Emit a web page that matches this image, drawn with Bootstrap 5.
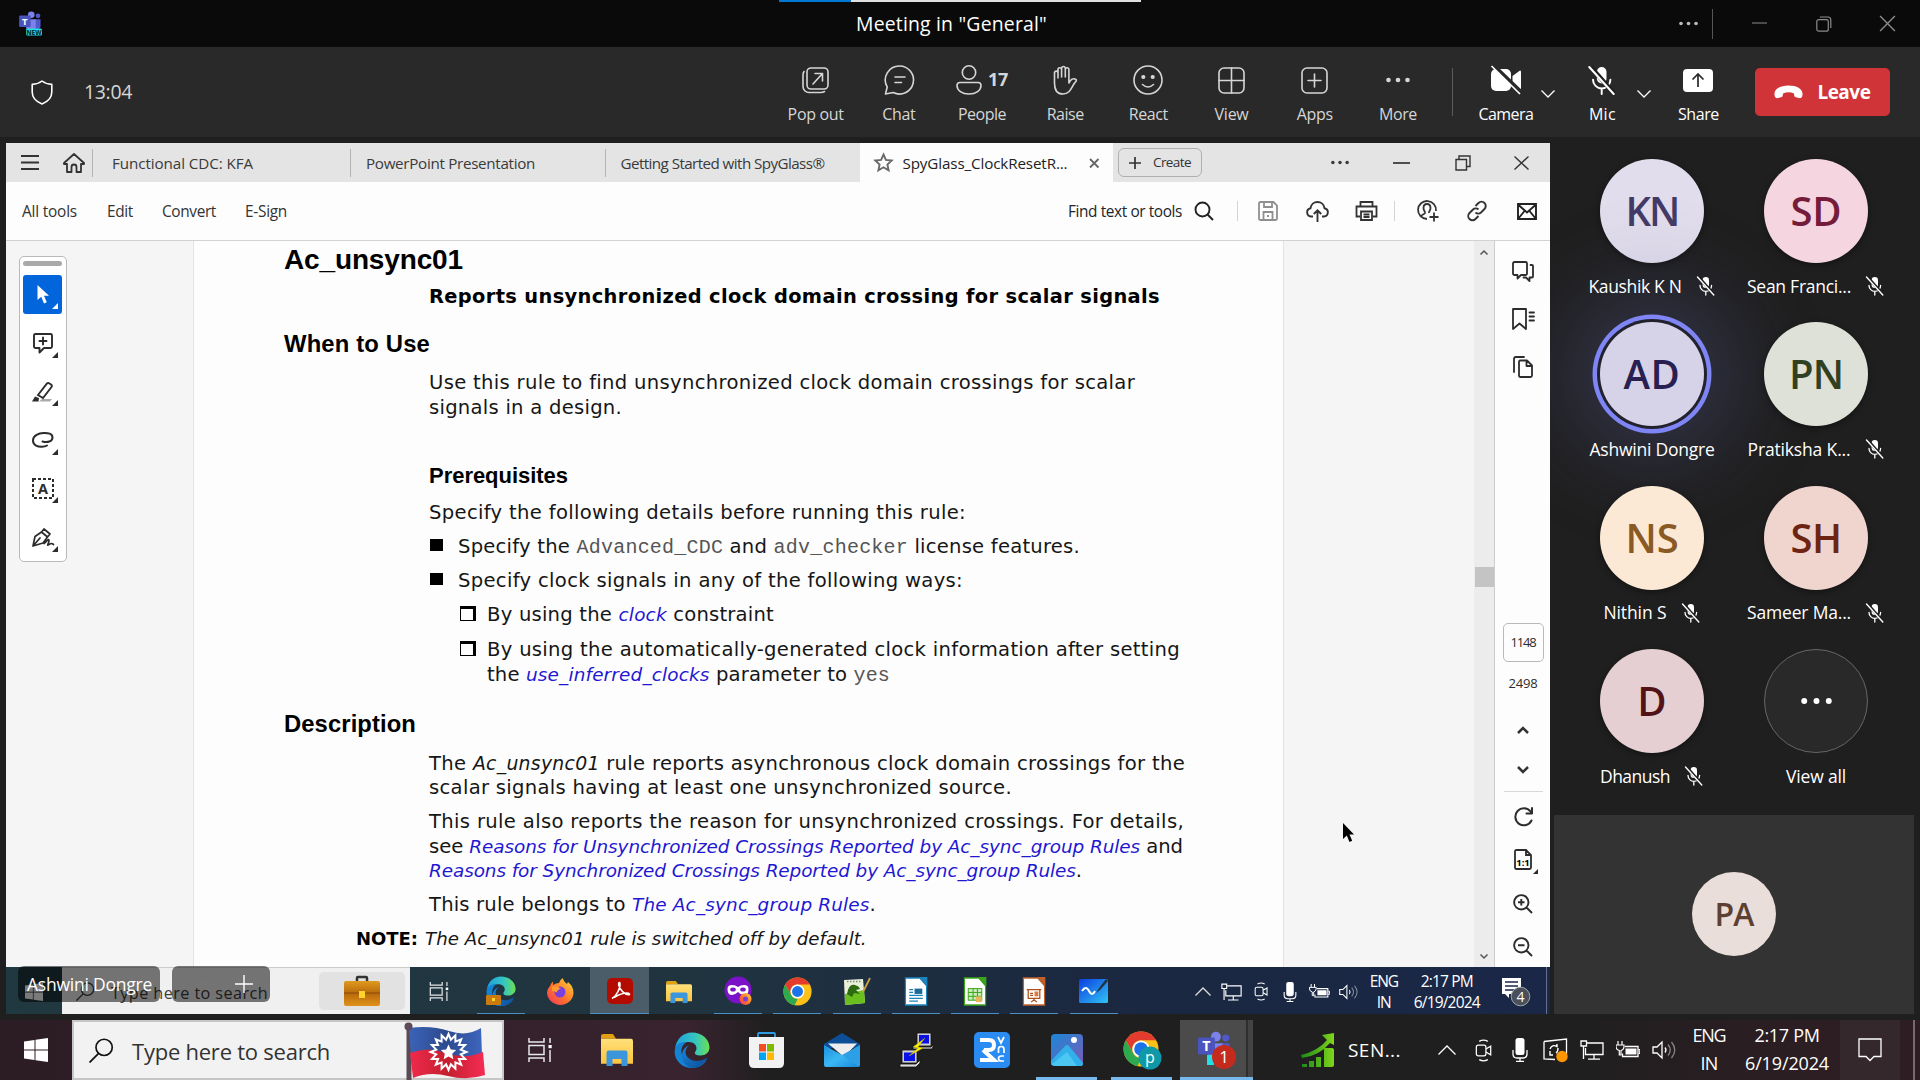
<!DOCTYPE html>
<html lang="en">
<head>
<meta charset="utf-8">
<title>Meeting in "General"</title>
<link rel="stylesheet" href="https://cdn.jsdelivr.net/npm/bootstrap@5.3.0/dist/css/bootstrap.min.css">
<style>
body{width:1920px;height:1080px;overflow:hidden;background:#1f1f1f;color:#fff;font-family:"Open Sans","Noto Sans",sans-serif;line-height:1.2}
svg{display:block;overflow:visible;flex:none}
.ln-i{fill:none;stroke:currentColor;stroke-width:1.6;stroke-linecap:round;stroke-linejoin:round}
[data-w]{display:inline-block;white-space:nowrap}
.bar{display:grid;align-items:center;justify-items:center}
.to-end{justify-self:end}
/* window title */
.titlebar{height:47px;background:#0a0a0a;grid-template-columns:60px 796px 191px 610px 56px 92px 37px 78px;font-size:19.4px;position:relative}
.loader{position:absolute;top:0;left:779px;width:362px;height:2px;background:linear-gradient(90deg,#0078d4 72px,#e1e1e1 72px)}
.dim{color:#8b8b8b}
.vline{border-right:1px solid #555;height:30px;width:100%;display:flex;align-items:center;justify-content:flex-end;padding-right:14px;align-self:center}
.close-x{justify-self:start;margin-left:37px}
/* meeting controls */
.controls{height:90px;background:#292929;color:#d6d6d6;grid-template-columns:84px 48px 642px repeat(8,83.2px) 31.4px 70px 14px 82px 14px 104px 135px 30px;font-size:16px}
.clock-t{font-size:19.5px}
.count{font-size:18px}
.gap-count{gap:6px}
.ctl{display:grid;justify-items:center;align-items:center;align-self:start;padding-top:16px;height:90px;grid-template-rows:34px 35px;align-content:start}
.ctl.on{color:#fff}
.ctl.mic{padding-left:13px;width:82px}
.ctl.share{padding-right:9px;width:104px}
.chev{margin-top:4px}
.sep{width:1px;height:48px;background:#5c5c5c;justify-self:start;margin-left:12px}
.leave{width:135px;height:48px;background:#d13438;border-radius:5px;font-size:19px;font-weight:700;color:#fff;gap:14px}
/* shared screen */
.stage{height:883px;padding:6px 0 0 6px}
.shared{width:1544px;height:871px;background:#fdfdfd;color:#333;position:relative}
.tabs{height:39px;background:#e4e4e4;grid-template-columns:35px 51px 258px 254.5px 255px 253.5px 94px 108px 50px 72px 52px 61px;font-size:15.2px;color:#3a3a3a}
.burger{justify-self:end;margin-right:2px}
.home-i{margin-left:14px}
.tab{height:28px;width:100%;border-left:1px solid #b4b4b4;padding-left:15px;display:flex;align-items:center}
.tab>span{padding-top:1.5px}
.tab.first{padding-left:19px}
.tab.cur{border:0;height:39px;padding:0 14px;background:#fdfdfd;gap:10px;color:#222}
.create{width:84px;height:29px;border:1.5px solid #b0b0b0;border-radius:6px;font-size:13.5px;color:#333;gap:12px}
.tools{height:59px;border-bottom:1px solid #d2d2d2;display:grid;align-items:center;grid-template-columns:16px 85px 55px 83px 823px 117px 37px 16px 59px 41px 56px 10px 47px 52px 47px;font-size:15.4px}
.tools>span{padding-top:3px}
.tools svg{justify-self:center}
.tick{width:1px;height:20px;background:#d4d4d4;justify-self:end}
.tick.first-edge{justify-self:start}
.work{height:726px}
.gutter{width:188px;background:#f5f5f5;border-right:1px solid #e3e3e3;padding:15px 0 0 13px}
.palette{width:48px;height:306px;background:#fff;border:1.5px solid #b9b9b9;border-radius:5px;padding:4px 3px}
.grip{height:5px;width:39px;background:#a9a9a9;border-radius:3px;margin-bottom:9px}
.tool{width:39px;height:39px;margin-bottom:9.6px;display:flex;align-items:center;justify-content:center;position:relative;color:#2c2c2c}
.tool::after{content:"";position:absolute;right:4px;bottom:5px;border:3px solid transparent;border-right-color:currentColor;border-bottom-color:currentColor}
.tool.sel{background:#0265dc;color:#fff;border-radius:3px}
.pdf{width:1090px;background:#fdfdfd;font-family:"DejaVu Sans",sans-serif;font-size:19.6px;color:#161616;padding:6.5px 0 0 90px;border-right:1px solid #e3e3e3}
.rest{width:190px;background:#f5f5f5}
.scroller{width:21px;background:#ececec;border-right:1px solid #ccc;display:grid;grid-template-rows:22px 304px 20px 1fr 22px;justify-items:center;align-items:center}
.thumb{width:19px;height:20px;background:#c4c4c4}
.side{width:55px;background:#fdfdfd;color:#2c2c2c;display:grid;justify-items:center;align-items:center;padding-left:1px;grid-template-rows:6px 48px 48px 47px 272px 44px 47px 34px 9px 41px 44px 46px 40px 1fr;font-size:13px}
.side-line{width:39px;height:1px;background:#d8d8d8}
.corner-t{position:absolute;right:-6px;bottom:-4px}
.pg{width:41px;height:39px;border:1.5px solid #b9b9b9;border-radius:5px;align-self:end}
.row-l{height:24px;line-height:24px;display:flex;align-items:baseline}
.row-l>[data-w]{line-height:24px}
.h-a{font:700 28px/24px "Liberation Sans",sans-serif;color:#000}
.h-b{font:700 23.8px/24px "Liberation Sans",sans-serif;color:#000}
.h-c{font:700 22px/24px "Liberation Sans",sans-serif;color:#000}
.sum-line{font-size:19.4px;color:#000}
.note-k{font-size:18px;color:#000}
.note-t{font-size:18.2px;margin-left:7px}
.in1{padding-left:145px}.in2{padding-left:203px}.in-note{padding-left:72px}
.bul{position:relative;padding-left:29px}
.bul::before{content:"";position:absolute;left:1px;top:4px;width:13px;height:12.5px;background:#000}
.bul.box{padding-left:58px}
.bul.box::before{background:none;left:31px;top:3px;width:16px;height:15px;border:1.5px solid #000;border-top-width:3.5px;border-right-width:3px}
.g1{margin-top:1px}.g05{margin-top:.4px}.g10{margin-top:10px}.g11{margin-top:10.7px}.g13{margin-top:13px}.g14{margin-top:13.5px}.g15{margin-top:15px}.g16{margin-top:16px}.g22{margin-top:22.5px}.g25{margin-top:24.8px}.g44{margin-top:44px}
.lk{color:#1f17d2;font-style:italic;font-size:.94em}
.pdf i:not(.note-t){font-size:.96em}
.tt{font-family:"Liberation Mono",monospace;color:#555;font-size:20px;line-height:1}
.pointer{position:absolute;left:1336px;top:679px}
.plate{position:absolute;top:823px;height:36px;border-radius:6px;background:rgba(0,0,0,.52);color:#fff;display:flex;align-items:center}
.plate.who{left:12px;width:142px;padding-left:9px;font-size:17.5px}
.plate.zoomer{left:166px;width:98px;justify-content:space-around;padding:0 6px 0 14px}
/* inner taskbar */
.inner-task{height:47px;background:linear-gradient(90deg,#203840,#203440 45%,#1b2840 70%,#1a2747);color:#fff;grid-template-columns:56px 348px 61.5px repeat(11,59.25px) 88px 31px 27px 27.5px 28px 30px 8px 42px 84px 54px 1fr;font-size:15.5px}
.inner-task .run{height:47px;width:48px;border-bottom:1px solid #4a8fc4;display:flex;align-items:center;justify-content:center;padding-top:2px}
.inner-task .run.hot{width:59px;background:#4b5d69}
.inner-task>svg{margin-top:2px}
.i-view{margin-right:3px}
.i-batt{margin-left:17px}
.i-vol{margin-left:18px}
.fakebox{width:348px;height:47px;background:#f0f0f0;color:#3c3c3c;display:grid;grid-template-columns:14px 35px 208px 86px;align-items:center;justify-items:start;border-top:1px solid #ccc;font-size:16.2px}
.fakebox>span{margin-top:6px}
.case{width:86px;height:38px;background:#e2e2e2;border-radius:5px;display:flex;align-items:center;justify-content:center}
.two{display:grid;justify-items:center;row-gap:2px;padding-top:3px}
.inner-task .two{row-gap:2.5px}
.edge-line{width:1px;height:47px;background:#65708a;justify-self:end;margin-right:3px}
/* roster */
.roster{width:370px;padding:16px 0 0 20px}
.people{display:grid;grid-template-columns:164px 164px;grid-auto-rows:163.4px}
.person{display:flex;flex-direction:column;align-items:center;font-size:17.5px}
.face{width:104px;height:104px;border-radius:50%;display:flex;align-items:center;justify-content:center;font-size:40px;font-weight:600;box-shadow:0 2px 6px rgba(0,0,0,.4);flex:none}
.face.talk{box-shadow:0 0 0 3px #22222c,0 0 0 7.5px #7f85f5,0 0 90px 35px rgba(91,95,160,.32)}
.nm{height:26px;margin-top:10px;display:flex;align-items:center;gap:14px;position:relative;z-index:1}
.kn{background:#e1ddec;color:#443a66}.sd{background:#f5d5df;color:#741c3a}.ad{background:#d6d3e8;color:#282050}.pn{background:#dde1d8;color:#324022}.ns{background:#fbe9d6;color:#8a5a25}.sh{background:#f0d5cf;color:#6e2412}.dh{background:#e6cfd2;color:#531217}.va{background:#292929;border:1px solid #666;box-shadow:none}
.self{width:360px;height:199px;background:#333;margin:2px 0 0 -16px;display:flex;align-items:center;justify-content:center}
.self .face{width:84px;height:84px;background:#e9deda;color:#5c4033;font-size:32px;box-shadow:none}
/* host taskbar */
.host-task{height:60px;background:linear-gradient(90deg,#2c1c24,#35222c 28%,#38232e 36%,#1f1f1f 40%,#1f1f1f 82%,#2b1e22 92%,#2e1e24);grid-template-columns:72px 432px repeat(10,75px) 47px 34px 79px 51px 38px 34px 37px 36px 36px 36px 54px 102px 62px 1fr;font-size:19px}
.search{width:432px;height:60px;background:#f2f2f2;border:2px solid #c6c6c6;color:#333;display:grid;grid-template-columns:58px 272px 1fr;align-items:center;justify-items:start;font-size:22px}
.search>span{margin-top:-2px}
.search .glass{margin-left:15px;margin-top:-3px;color:#111}
.h-view{margin-right:3px}
.app{height:60px;width:61px;display:flex;align-items:center;justify-content:center;border-bottom:3px solid transparent;padding-top:3px}
.app.live{border-color:#76b9ed}
.app.front{width:73px;background:linear-gradient(90deg,#4b4b4b 66px,#2e2e2e 66px,#2e2e2e 68px,#434343 68px);padding-right:1px}
.host-task .two{row-gap:6px;font-size:18px;padding-top:0}
.h-chev{margin-left:15px}
.note{height:60px;width:60px;background:#35282c;display:flex;align-items:center;justify-content:center;justify-self:end}
.peek{border-left:2px solid #77696e;height:60px;justify-self:end;width:7px}
</style>
<script src="https://cdn.jsdelivr.net/npm/bootstrap@5.3.0/dist/js/bootstrap.bundle.min.js"></script>
</head>
<body>
<svg width="0" height="0" class="position-absolute">
<defs>
<linearGradient id="gTeal" x1="0" y1="0" x2="1" y2="0"><stop offset="0" stop-color="#1e9fe0"/><stop offset=".6" stop-color="#36c6c0"/><stop offset="1" stop-color="#6be04f"/></linearGradient>
<linearGradient id="gBlue" x1="0" y1="0" x2="1" y2="1"><stop offset="0" stop-color="#1a86dc"/><stop offset="1" stop-color="#0b4c96"/></linearGradient>
<linearGradient id="gFox" x1="0" y1="1" x2="1" y2="0"><stop offset="0" stop-color="#f4325e"/><stop offset=".5" stop-color="#ff7a28"/><stop offset="1" stop-color="#ffdf3c"/></linearGradient>
<linearGradient id="gFold" x1="0" y1="0" x2="0" y2="1"><stop offset="0" stop-color="#ffe07a"/><stop offset="1" stop-color="#fbc440"/></linearGradient>
<linearGradient id="gSky" x1="0" y1="0" x2="1" y2="1"><stop offset="0" stop-color="#1b87d8"/><stop offset="1" stop-color="#7a5bb4"/></linearGradient>
<linearGradient id="gMail" x1="0" y1="0" x2="1" y2="1"><stop offset="0" stop-color="#1b8fdc"/><stop offset=".5" stop-color="#3bb8f3"/><stop offset="1" stop-color="#1887da"/></linearGradient>
<linearGradient id="gUp" x1="0" y1="0" x2="1" y2="0"><stop offset="0" stop-color="#1d8a1a"/><stop offset="1" stop-color="#7fd61a"/></linearGradient>
<linearGradient id="gWb" x1="0" y1="0" x2="1" y2="1"><stop offset="0" stop-color="#0b3fe0"/><stop offset="1" stop-color="#31c4f4"/></linearGradient>
<linearGradient id="gBr" x1="0" y1="0" x2="0" y2="1"><stop offset="0" stop-color="#e09a1e"/><stop offset=".5" stop-color="#b86a0c"/><stop offset="1" stop-color="#e0921a"/></linearGradient>
<linearGradient id="gFb" x1="0" y1="0" x2="1" y2="0"><stop offset="0" stop-color="#3c63b8"/><stop offset=".5" stop-color="#2c4a8e"/><stop offset="1" stop-color="#3e66bd"/></linearGradient>
<linearGradient id="gFr" x1="0" y1="0" x2="1" y2="0"><stop offset="0" stop-color="#f02a4c"/><stop offset=".5" stop-color="#c41f2e"/><stop offset="1" stop-color="#f62c55"/></linearGradient>
<symbol id="teams" viewBox="0 0 34 36"><circle cx="19" cy="6" r="5.2" fill="#7b83eb"/><circle cx="29.500" cy="7.500" r="3.700" fill="#5059c9"/><path d="M24 13h9.500v11a6 6 0 0 1-9.500 4z" fill="#5059c9"/><path d="M11 13h15v12a8 8 0 0 1-15 2z" fill="#7b83eb"/><rect x="0" y="7" width="18" height="18" rx="1.500" fill="#4b53bc"/><text x="9" y="21.500" font-size="15" font-weight="700" text-anchor="middle" fill="#fff" font-family="Open Sans">T</text></symbol>
<symbol id="mute" viewBox="0 0 20 20"><rect x="6.600" y="1" width="6.400" height="11" rx="3.200" fill="currentColor"/><path d="M4 9.500a5.800 5.800 0 0 0 11.600 0M9.800 15.500V19" fill="none" stroke="currentColor" stroke-width="1.300" stroke-linecap="round"/><path d="M2.500 1 18 18.500" stroke="#1f1f1f" stroke-width="3"/><path d="M1.500 1 17.800 19" stroke="currentColor" stroke-width="1.400" stroke-linecap="round"/></symbol>
<symbol id="down" viewBox="0 0 14 8"><path d="M.5.5 7 7 13.500.5" fill="none" stroke="currentColor" stroke-width="1.300"/></symbol>
<symbol id="dots" viewBox="0 0 24 6"><circle cx="2.500" cy="3" r="2.300" fill="currentColor"/><circle cx="12" cy="3" r="2.300" fill="currentColor"/><circle cx="21.500" cy="3" r="2.300" fill="currentColor"/></symbol>
<symbol id="restore" viewBox="0 0 16 16"><g fill="none" stroke="currentColor" stroke-width="1.200"><rect x=".8" y="3.600" width="11.500" height="11.600" rx="2"/><path d="M3.800 1h8a3 3 0 0 1 3 3v8"/></g></symbol>
<symbol id="cross" viewBox="0 0 16 16"><path d="M1 1 15 15M15 1 1 15" stroke="currentColor" stroke-width="1.300" fill="none"/></symbol>
<symbol id="tview" viewBox="0 0 24 24"><g fill="none" stroke="#e8e8e8" stroke-width="1.500"><path d="M1 0v4h15V0M1 24v-4h15v4M1 7.500h15v9H1zM22 0v5M22 12v12"/></g><rect x="20.500" y="7" width="3.200" height="3.200" fill="#fff"/></symbol>
<symbol id="folder" viewBox="0 0 32 27"><path d="M0 2a2 2 0 0 1 2-2h10l3 4h-15z" fill="#e0a010"/><path d="M0 4h30a2 2 0 0 1 2 2v19H0z" fill="url(#gFold)"/><path d="M5.500 27V16a2 2 0 0 1 2-2h17a2 2 0 0 1 2 2v11h-6v-6h-9v6z" fill="#3c96dc"/></symbol>
<symbol id="edge" viewBox="0 0 36 36"><path d="M1 17C2 7 9 .5 18 .5c10 0 17 6.500 17.500 14.500.3 5-4 8.500-9 8.500-4 0-6-1.300-5.600-3 .3-1.200 1.600-1.800 1.600-4.500 0-3-3-6-7.500-6C8 10 3 12 1 17z" fill="url(#gTeal)"/><path d="M.6 19C1 11.500 8 9.500 13 10c-4 2-6 6-5.500 10.500C8 27 13 32 20 32.500c5 .3 9-1.500 12.500-4.500C30 33 24 36 18 36 8 36 .3 28.500.6 19z" fill="#1583d4"/><path d="M15 13.500c-4 3-4.500 8-1.500 11.500 4.500 5.500 13 5 19 1 .5 0 .8.500.3 1.300C29.500 33 24 36 18 36c-7-1.500-10.500-7-10-13 .3-5 3.500-8.500 7-9.500z" fill="url(#gBlue)"/></symbol>
<symbol id="chrome" viewBox="0 0 36 36"><circle cx="18" cy="18" r="17.500" fill="#fbc116"/><path d="M2.800 9.300A17.500 17.500 0 0 1 33.200 9.300H18a9 9 0 0 0-7.800 13.200z" fill="#e33b2e"/><path d="M2.800 9.300 10.200 22.500a9 9 0 0 0 8 4.500l-3.700 8.200A17.500 17.500 0 0 1 2.800 9.300z" fill="#2da94f"/><circle cx="18" cy="18" r="8.600" fill="#fff"/><circle cx="18" cy="18" r="6.800" fill="#1a73e8"/></symbol>
<symbol id="win" viewBox="0 0 24 24"><path d="M0 3.400 10.500 2v9.500H0zM11.500 1.800 24 0v11.500H11.500zM0 12.500h10.500V22L0 20.600zM11.500 12.500H24V24l-12.500-1.800z" fill="#fff"/></symbol>
<symbol id="cam2" viewBox="0 0 18 24"><g fill="none" stroke="currentColor" stroke-width="1.300"><rect x="1" y="6.500" width="10" height="11" rx="2"/><path d="m11 10.500 5-3v9l-5-3M4 2.500q4.500-2.500 9 0M4 21.500q4.500 2.500 9 0"/></g></symbol>
<symbol id="mic2" viewBox="0 0 16 24"><rect x="3.500" y="0" width="9" height="17" rx="2.500" fill="#fff"/><path d="M1 12v4q0 4 4 4h6q4 0 4-4v-4M8 20v3M4 23.400h8" fill="none" stroke="#fff" stroke-width="1.300"/></symbol>
<symbol id="net" viewBox="0 0 24 20"><g fill="none" stroke="currentColor" stroke-width="1.300"><path d="M7 3h16v11.500H5.500V8M14 14.500V19M8 19.200h12"/><path d="M1 1h5.500v5H1zM3.500 6v13"/></g></symbol>
<symbol id="batt" viewBox="0 0 24 18"><path d="M9 5.500h13v10H6.500v-3" fill="none" stroke="currentColor" stroke-width="1.300"/><rect x="9.500" y="7.500" width="11" height="6" fill="currentColor"/><path d="M22.500 8.500h1.300v4h-1.300M2 0v4M6 0v4M0 4h8v2a4 4 0 0 1-3 3.500V14H3.300V9.500A4 4 0 0 1 0 6z" fill="none" stroke="currentColor" stroke-width="1.200"/></symbol>
<symbol id="vol" viewBox="0 0 24 20"><path d="M1 7h4l5-5v16l-5-5H1z" fill="none" stroke="currentColor" stroke-width="1.300"/><path d="M13 7.500q2 2.500 0 5" fill="none" stroke="currentColor" stroke-width="1.300"/><path d="M16 4.500q4.500 5.500 0 11M19.500 2q6.500 8 0 16" fill="none" stroke="currentColor" opacity=".45" stroke-width="1.300"/></symbol>
<symbol id="sheet" viewBox="0 0 24 30"><path d="M1 1h15l7 8v20H1z" fill="#fff" stroke="currentColor" stroke-width="1.400"/><path d="M15.500 0H24v9.500z" fill="currentColor"/></symbol>
<symbol id="lens" viewBox="0 0 24 24"><circle cx="14.500" cy="9" r="7.800" fill="none" stroke="currentColor" stroke-width="1.600"/><path d="M9 15 .5 23.500" stroke="currentColor" stroke-width="1.700"/></symbol>
</defs>
</svg>

<header class="bar titlebar">
  <div class="loader"></div>
  <svg width="24" height="25"><use href="#teams" width="24" height="23"/><rect x="8" y="17.500" width="16" height="7" rx="1.500" fill="#22e0e8"/><text x="16" y="23.500" font-size="6.500" font-weight="800" text-anchor="middle" fill="#06363c">NEW</text></svg>
  <span></span>
  <span data-w="191">Meeting in "General"</span>
  <span></span>
  <div class="vline dim"><svg width="19" height="5" color="#bbb"><use href="#dots"/></svg></div>
  <svg class="dim" width="15" height="3"><path d="M0 1h15" stroke="currentColor"/></svg>
  <svg class="dim" width="16" height="16"><use href="#restore"/></svg>
  <svg class="dim close-x" width="17" height="17"><use href="#cross"/></svg>
</header>

<nav class="bar controls">
  <svg class="ln-i text-white" width="22" height="25" viewBox="0 0 22 25"><path d="M11 1q4 3.200 9.800 3.400V12q0 8-9.800 12Q1.200 20 1.200 12V4.400Q7 4.200 11 1z"/></svg>
  <span data-w="48" class="clock-t">13:04</span>
  <span></span>
  <div class="ctl"><svg class="ln-i" width="27" height="27" viewBox="0 0 27 27"><rect x="5" y="1" width="21" height="21" rx="4"/><path d="M2 4.500Q1 6 1 8v11.500a6 6 0 0 0 6 6h11.500q2.500 0 4-1M11 17l9-10M13 6.500h7.500V14"/></svg><span data-w="56">Pop out</span></div>
  <div class="ctl"><svg class="ln-i" width="30" height="30" viewBox="0 0 30 30"><path d="M15.500 1a14 14 0 1 1-6.300 26.500L1.500 29l1.700-7A14 14 0 0 1 15.500 1zM11 12h10M11 17.500h6.500"/></svg><span data-w="33">Chat</span></div>
  <div class="ctl"><div class="d-flex align-items-center gap-count"><svg class="ln-i" width="26" height="30" viewBox="0 0 26 30"><circle cx="13" cy="7.500" r="6.700"/><path d="M4 17.500h18q3 0 3 3c0 5-5 8.500-12 8.500S1 25.500 1 20.500q0-3 3-3z"/></svg><b data-w="20" class="count">17</b></div><span data-w="48">People</span></div>
  <div class="ctl"><svg class="ln-i" width="25" height="30" viewBox="0 0 25 30"><path d="M1.500 7.500a1.800 1.800 0 0 1 3.500 0V13V4.500a1.800 1.800 0 0 1 3.600 0V12 3a1.900 1.900 0 0 1 3.700 0v9V4.500a1.800 1.800 0 0 1 3.600 0V18c2-3.500 4-5.500 7-3.500 1.400 1-.5 2.200-2 4.500-3 5-4.500 10-11 10C3 29 1.500 24 1.500 18z"/></svg><span data-w="37">Raise</span></div>
  <div class="ctl"><svg class="ln-i" width="30" height="30" viewBox="0 0 30 30"><circle cx="15" cy="15" r="14"/><circle cx="10.300" cy="12" r="1.300" fill="currentColor"/><circle cx="19.700" cy="12" r="1.300" fill="currentColor"/><path d="M9.500 19.500q5.500 5 11 0"/></svg><span data-w="39">React</span></div>
  <div class="ctl"><svg class="ln-i" width="27" height="27" viewBox="0 0 27 27"><rect x="1" y="1" width="25" height="25" rx="5"/><path d="M13.500 1v25M1 13.500h25"/></svg><span data-w="34">View</span></div>
  <div class="ctl"><svg class="ln-i" width="27" height="27" viewBox="0 0 27 27"><rect x="1" y="1" width="25" height="25" rx="5"/><path d="M13.500 7v13M7 13.500h13"/></svg><span data-w="36">Apps</span></div>
  <div class="ctl"><svg width="24" height="6"><use href="#dots"/></svg><span data-w="38">More</span></div>
  <div class="sep"></div>
  <div class="ctl on"><svg width="32" height="30" viewBox="0 0 32 30"><rect x="1" y="4" width="20" height="22" rx="5" fill="#fff"/><path d="M22.500 11 30 5.500q1 0 1 1v17q0 1-1 1L22.500 19z" fill="#fff"/><path d="M3 0 32 28" stroke="#292929" stroke-width="4"/><path d="M1.500 1 30 29" stroke="#fff" stroke-width="1.700"/></svg><span data-w="55">Camera</span></div>
  <svg class="text-white chev" width="14" height="8"><use href="#down"/></svg>
  <div class="ctl on mic"><svg width="30" height="31" viewBox="0 0 20 20"><use href="#mute"/></svg><span data-w="27">Mic</span></div>
  <svg class="text-white chev" width="14" height="8"><use href="#down"/></svg>
  <div class="ctl on share"><svg width="30" height="23" viewBox="0 0 30 23"><rect width="30" height="23" rx="4" fill="#fff"/><path d="M15 18V5M9.500 10.500 15 5l5.500 5.500" fill="none" stroke="#292929" stroke-width="1.700"/></svg><span data-w="41">Share</span></div>
  <button class="btn leave p-0 d-flex align-items-center justify-content-center"><svg width="29" height="14" viewBox="0 0 29 14"><path d="M14.500.5C23 .5 29 4 28.500 9.500c-.2 3-1.500 4-3.500 3.600l-3-.8c-1.500-.4-1.800-1.300-2-3.800-3.500-1.700-7.500-1.700-11 0-.2 2.500-.5 3.400-2 3.800l-3 .8C2 13.500.7 12.500.5 9.500 0 4 6 .5 14.500.5z" fill="#fff"/></svg><span data-w="53">Leave</span></button>
</nav>

<main class="d-flex stage">
<section class="shared">
  <div class="bar tabs">
    <svg class="burger" width="18" height="15"><path d="M0 1h18M0 7.500h18M0 14h18" stroke="#333" stroke-width="2"/></svg>
    <svg class="home-i" width="22" height="20" viewBox="0 0 22 20"><path d="M1 10 11 1l10 9v1h-3v8h-4.500v-5a2.500 2.500 0 0 0-5 0v5H4v-8H1z" fill="none" stroke="#333" stroke-width="1.800" stroke-linejoin="round"/></svg>
    <div class="tab first"><span data-w="141">Functional CDC: KFA</span></div>
    <div class="tab"><span data-w="169">PowerPoint Presentation</span></div>
    <div class="tab"><span data-w="204">Getting Started with SpyGlass®</span></div>
    <div class="tab cur"><svg width="19" height="19" viewBox="0 0 19 19"><path d="m9.500 1.500 2.400 5.400 5.800.6-4.300 4 1.200 5.800-5.100-3-5.100 3 1.200-5.800-4.300-4 5.800-.6z" fill="none" stroke="#6a6a6a" stroke-width="1.900"/></svg><span data-w="165">SpyGlass_ClockResetR...</span><svg width="10" height="10" class="ms-auto"><path d="M1 1 9.500 9.500M9.500 1 1 9.500" stroke="#666" stroke-width="1.800"/></svg></div>
    <div class="create d-flex align-items-center justify-content-center"><svg width="12" height="12"><path d="M6 0v12M0 6h12" stroke="#333" stroke-width="1.700"/></svg><span data-w="38">Create</span></div>
    <span></span>
    <svg width="18" height="5"><use href="#dots"/></svg>
    <svg width="17" height="2"><path d="M0 1h17" stroke="#333" stroke-width="1.700"/></svg>
    <svg width="16" height="16" viewBox="0 0 16 16"><path d="M1 4.500h10.500V15H1zM4 4V1h11v10.500h-3" fill="none" stroke="#333" stroke-width="1.400"/></svg>
    <svg class="ms-1" width="15" height="14"><path d="M.5.5 14.500 13.500M14.500.5.5 13.500" stroke="#333" stroke-width="1.400"/></svg>
  </div>
  <div class="tools">
    <span></span><span><span data-w="55">All tools</span></span><span><span data-w="26">Edit</span></span><span><span data-w="54">Convert</span></span><span><span data-w="42">E-Sign</span></span>
    <span class="text-dark"><span data-w="114">Find text or tools</span></span>
    <svg width="20" height="20" viewBox="0 0 20 20"><circle cx="8.500" cy="8.500" r="7" fill="none" stroke="#222" stroke-width="1.900"/><path d="m13.500 13.500 5.500 5.500" stroke="#222" stroke-width="2"/></svg>
    <i class="tick"></i>
    <svg width="20" height="20" viewBox="0 0 20 20"><path d="M2.500 1h13L19 4.500v13a1.500 1.500 0 0 1-1.500 1.500h-15A1.500 1.500 0 0 1 1 17.500v-15A1.500 1.500 0 0 1 2.500 1zM6 1v5h8V1M5.500 19v-8h9v8M9 15h2" fill="none" stroke="#8f8f8f" stroke-width="1.800"/></svg>
    <svg width="23" height="21" viewBox="0 0 23 21"><path d="M7 15.500H5a4.200 4.200 0 0 1-.5-8.300C5 3.500 8 1 11.500 1S18 3.500 18.500 7.200a4.200 4.200 0 0 1-.5 8.300h-2M11.500 21V9.500M7.800 13l3.700-3.700 3.700 3.700" fill="none" stroke="#333" stroke-width="1.900"/></svg>
    <svg width="23" height="20" viewBox="0 0 23 20"><path d="M5.500 5.500V1h12v4.500M5 15.500H1.500v-10h20v10H18M6 10.500h11V19H6zM8.500 13.500h6M8.500 16h6" fill="none" stroke="#333" stroke-width="1.800"/></svg>
    <i class="tick first-edge"></i>
    <svg width="22" height="22" viewBox="0 0 22 22"><path d="M10 19a9 9 0 1 1 9-8M3.500 16.500c1-2 4-2 4.500-3.500.4-1.500-1.500-2-1.500-5C6.500 5.500 8 4 10 4s3.500 1.500 3.500 4c0 3-1.900 3.500-1.500 5M17 12.500v9M12.500 17h9" fill="none" stroke="#333" stroke-width="1.800"/></svg>
    <svg width="20" height="20" viewBox="0 0 20 20"><path d="m8.500 5 3-3a4 4 0 0 1 6 6l-3.500 3.500a4 4 0 0 1-5.500 0M11.500 15l-3 3a4 4 0 0 1-6-6L6 8.500a4 4 0 0 1 5.500 0" fill="none" stroke="#333" stroke-width="1.900"/></svg>
    <svg width="20" height="17" viewBox="0 0 20 17"><path d="M1 1h18v15H1zM1 1.500l9 8 9-8M1 16l6.500-8M19 16l-6.500-8" fill="none" stroke="#222" stroke-width="1.900"/></svg>
  </div>
  <div class="d-flex work">
    <div class="gutter">
      <div class="palette">
        <div class="grip"></div>
        <div class="tool sel"><svg width="12" height="19" viewBox="0 0 12 19"><path d="M.5 0v15l3.700-3.300L7 18.500l2.800-1.200L7 10.800h5z" fill="#fff"/></svg></div>
        <div class="tool"><svg class="ln-i" width="20" height="20" viewBox="0 0 20 20"><path d="M2.500 1h15A1.500 1.500 0 0 1 19 2.500v11a1.500 1.500 0 0 1-1.500 1.500H11l-4.500 4.500V15h-4A1.500 1.500 0 0 1 1 13.500v-11A1.500 1.500 0 0 1 2.500 1zM10 4.500v7M6.500 8h7" stroke-width="1.900"/></svg></div>
        <div class="tool"><svg width="21" height="20" viewBox="0 0 21 20"><path d="M10 17h10l-2 2.500H7z" fill="#aaa"/><path d="m6 13 9-11.500q1-1 2.500 0l1.500 1q1.500 1 .5 2.500L11 16z" fill="none" stroke="#2c2c2c" stroke-width="1.900"/><path d="M0 19.500 3 14.500 7 16l-.5 3.500z" fill="#2c2c2c"/></svg></div>
        <div class="tool"><svg class="ln-i" width="22" height="16" viewBox="0 0 22 16"><path d="M10.500 9.500c5 1.500 10 0 10-4S16 .8 11.500 1 1 3.500 1 8.500 6 15 10 14.800q3 0 5-1.300" stroke-width="2"/></svg></div>
        <div class="tool"><svg width="22" height="21" viewBox="0 0 22 21"><rect x="1" y="1" width="20" height="19" fill="none" stroke="#2c2c2c" stroke-width="2" stroke-dasharray="3 2"/><text x="11" y="15.800" font-size="14.500" font-weight="700" text-anchor="middle" fill="#2c2c2c">A</text></svg></div>
        <div class="tool"><svg class="ln-i" width="22" height="19" viewBox="0 0 22 19"><path d="m1 18 2-9.500L9.500 4l6 5L11 15zM1 18l7-8M9.500 4l2.500-3 6 5-2.500 3M12 15.500c2-1.500 5-6 5-3s-3 6 0 4 3-1 4.500 0" stroke-width="1.700"/></svg></div>
      </div>
    </div>
    <article class="pdf">
      <div class="row-l"><span data-w="179" class="h-a">Ac_unsync01</span></div>
      <div class="row-l in1 g14"><b data-w="731" class="sum-line">Reports unsynchronized clock domain crossing for scalar signals</b></div>
      <div class="row-l g22"><span data-w="146" class="h-b">When to Use</span></div>
      <div class="row-l in1 g15"><span data-w="706">Use this rule to find unsynchronized clock domain crossings for scalar</span></div>
      <div class="row-l in1 g1"><span data-w="193">signals in a design.</span></div>
      <div class="row-l in1 g44"><span data-w="139" class="h-c">Prerequisites</span></div>
      <div class="row-l in1 g13"><span data-w="537">Specify the following details before running this rule:</span></div>
      <div class="row-l in1 g10"><div class="bul"><span data-w="622">Specify the <span class="tt">Advanced_CDC</span> and <span class="tt">adv_checker</span> license features.</span></div></div>
      <div class="row-l in1 g10"><div class="bul"><span data-w="505">Specify clock signals in any of the following ways:</span></div></div>
      <div class="row-l in1 g11"><div class="bul box"><span data-w="287">By using the <span class="lk">clock</span> constraint</span></div></div>
      <div class="row-l in1 g11"><div class="bul box"><span data-w="693">By using the automatically-generated clock information after setting</span></div></div>
      <div class="row-l in2 g1"><span data-w="403">the <span class="lk">use_inferred_clocks</span> parameter to <span class="tt">yes</span></span></div>
      <div class="row-l g25"><span data-w="132" class="h-b">Description</span></div>
      <div class="row-l in1 g16"><span data-w="756">The <i>Ac_unsync01</i> rule reports asynchronous clock domain crossings for the</span></div>
      <div class="row-l in1 g05"><span data-w="583">scalar signals having at least one unsynchronized source.</span></div>
      <div class="row-l in1 g10"><span data-w="755">This rule also reports the reason for unsynchronized crossings. For details,</span></div>
      <div class="row-l in1 g1"><span data-w="754">see <span class="lk">Reasons for Unsynchronized Crossings Reported by Ac_sync_group Rules</span> and</span></div>
      <div class="row-l in1 g05"><span data-w="653"><span class="lk">Reasons for Synchronized Crossings Reported by Ac_sync_group Rules</span>.</span></div>
      <div class="row-l in1 g10"><span data-w="447">This rule belongs to <span class="lk">The Ac_sync_group Rules</span>.</span></div>
      <div class="row-l in-note g10"><b data-w="62" class="note-k">NOTE:</b><i data-w="442" class="note-t">The Ac_unsync01 rule is switched off by default.</i></div>
    </article>
    <div class="rest"></div>
    <div class="scroller">
      <svg width="8" height="5"><path d="M.5 4.500 4 1l3.500 3.500" stroke="#555" stroke-width="1.500" fill="none"/></svg>
      <span></span><div class="thumb"></div><span></span>
      <svg width="8" height="5"><path d="M.5.5 4 4 7.500.5" stroke="#555" stroke-width="1.500" fill="none"/></svg>
    </div>
    <div class="side">
      <span></span>
      <svg class="ln-i" width="22" height="21" viewBox="0 0 22 21"><path d="M2.500 1h11A1.500 1.500 0 0 1 15 2.500v10a1.500 1.500 0 0 1-1.500 1.500H9l-3.500 3.500V14h-3A1.500 1.500 0 0 1 1 12.500v-10A1.500 1.500 0 0 1 2.500 1zM18.500 4H20q1 0 1 1v10.500q0 1-1 1h-2.500V20L14 16.500h-2.500" stroke-width="1.800"/></svg>
      <svg class="ln-i" width="22" height="22" viewBox="0 0 22 22"><path d="M1 1h13v20l-6.500-5.500L1 21zM17.500 4.500H22M17.500 8.500H22M17.500 12.500H22" stroke-width="1.800"/></svg>
      <svg class="ln-i" width="20" height="22" viewBox="0 0 20 22"><path d="M7 4.500h7l5 5v10q0 1.500-1.500 1.500h-10Q6 21 6 19.500V6q0-1.500 1-1.500zM13.500 5v5H19M1 16V3q0-2 2-2h8" stroke-width="1.800"/></svg>
      <div class="pg d-flex align-items-center justify-content-center"><span data-w="25">1148</span></div>
      <span data-w="29">2498</span>
      <svg width="12" height="8"><path d="M1 7 6 2l5 5" stroke="#333" stroke-width="2.500" fill="none"/></svg>
      <svg width="12" height="8"><path d="M1 1 6 6l5-5" stroke="#333" stroke-width="2.500" fill="none"/></svg>
      <i class="side-line"></i>
      <svg class="ln-i" width="19" height="19" viewBox="0 0 19 19"><path d="M17.500 13.500A8.500 8.500 0 1 1 16.500 4.500M18 1v5.500h-5.500" stroke-width="2"/></svg>
      <div class="position-relative"><svg width="18" height="21" viewBox="0 0 18 21"><path d="M2.500 1H12l5 5v12.500q0 1.500-1.500 1.500h-13Q1 20 1 18.500v-16Q1 1 2.500 1zM12 1v5h5" fill="none" stroke="#2c2c2c" stroke-width="1.800"/><text x="9" y="16.500" font-size="9.500" font-weight="700" text-anchor="middle">1:1</text></svg><svg class="corner-t" width="5" height="5"><path d="M5 0v5H0z" fill="#2c2c2c"/></svg></div>
      <svg width="20" height="20" viewBox="0 0 20 20"><path d="M15.500 8.300a7.200 7.200 0 1 1-14.400 0 7.200 7.200 0 0 1 14.400 0zM13.500 13.500l5.500 5.500M8.300 5v6.500M5 8.300h6.500" fill="none" stroke="#2c2c2c" stroke-width="1.900"/></svg>
      <svg width="20" height="20" viewBox="0 0 20 20"><path d="M15.500 8.300a7.200 7.200 0 1 1-14.400 0 7.200 7.200 0 0 1 14.400 0zM13.500 13.500l5.500 5.500M5 8.300h6.500" fill="none" stroke="#2c2c2c" stroke-width="1.900"/></svg>
    </div>
  </div>
  <div class="bar inner-task">
    <svg width="20" height="18"><use href="#win" width="20" height="18"/></svg>
    <div class="fakebox"><span></span><svg width="19" height="19"><use href="#lens"/></svg><span data-w="157">Type here to search</span><div class="case"><svg width="38" height="31" viewBox="0 0 38 31"><path d="M14 5V2q0-1 1-1h8q1 0 1 1v3" fill="none" stroke="#333" stroke-width="2.500"/><rect x="1" y="5" width="36" height="25" rx="2" fill="url(#gBr)"/><path d="M1 17h36" stroke="#8a4b06"/><rect x="16" y="15" width="6" height="7" fill="#ffd42a"/></svg></div></div>
    <svg class="i-view" width="20" height="19"><use href="#tview"/></svg>
    <div class="run"><svg width="30" height="30"><use href="#edge"/><rect y="19" width="15" height="10" rx="1" fill="#c97b10"/><rect x="6" y="22" width="3" height="3" fill="#ffd42a"/></svg></div>
    <svg width="27" height="27" viewBox="0 0 27 27"><path d="M3 8Q4 5 6 3.500V7q3-2 6-2Q13 1.500 16 0q0 3 4 6l1-2q6 5 5.500 11.500C26 22 20 27 13.500 27S0 22 0 14.500Q0 11 3 8z" fill="url(#gFox)"/><circle cx="13" cy="14" r="5.500" fill="#7a3fe0"/><path d="M5 9q5-2 9 2-4 0-4 3.500Q8 13 5 13z" fill="#ff9a30"/></svg>
    <div class="run hot"><svg width="26" height="26" viewBox="0 0 26 26"><rect width="26" height="26" rx="5" fill="#b30b00"/><path d="M5 20.500c4-2 8.500-10 8-15-.3-2-1.800-1-1.300 1.500 1 5 6 9.500 9.800 9.800 2 0 1-1.800-1.500-1.800-4 0-9 2-13 4.500" fill="none" stroke="#fff" stroke-width="1.500"/></svg></div>
    <svg width="26" height="22"><use href="#folder"/></svg>
    <div class="run"><svg width="28" height="30" viewBox="0 0 28 30"><circle cx="14" cy="14" r="13.500" fill="#7a12c8"/><path d="M3.500 13q0-4 4.500-4 3.500 0 6 2 2.500-2 6-2 4.500 0 4.500 4 0 6-4.500 6-3 0-6-3-3 3-6 3-4.500 0-4.500-6z" fill="#fff"/><ellipse cx="9" cy="13.500" rx="2.800" ry="2" fill="#7a12c8"/><ellipse cx="19" cy="13.500" rx="2.800" ry="2" fill="#7a12c8"/><circle cx="21.500" cy="23" r="6" fill="url(#gFox)"/><circle cx="21.500" cy="23" r="2.500" fill="#7a3fe0"/></svg></div>
    <div class="run"><svg width="29" height="29"><use href="#chrome"/></svg></div>
    <div class="run"><svg width="28" height="29" viewBox="0 0 28 29"><path d="M1 3 20 2l2 24-20 2z" fill="#e9efd8"/><path d="M2 17 21 13l1 13-20 2z" fill="#6abf1c"/><path d="M5 13q2-6 7-5 4 1 5 4l-4 1 4 4-6-1-2 4-5-3z" fill="#2d6a12"/><path d="M4 4.500h14" stroke="#888" stroke-width="1.500" stroke-dasharray="1.500 1.500"/><path d="M27 1 20 15" stroke="#c9a040" stroke-width="1.800"/></svg></div>
    <div class="run"><svg width="24" height="29" viewBox="0 0 24 30" color="#1b84bd"><use href="#sheet"/><path d="M5 13h4M5 16h4M5 19h14M5 22h14M5 25h9" stroke="#1b84bd" stroke-width="1.300"/><rect x="10.500" y="12" width="8" height="5.500" fill="#1b6a9a"/></svg></div>
    <div class="run"><svg width="24" height="29" viewBox="0 0 24 30" color="#3aa518"><use href="#sheet"/><rect x="5" y="12" width="14" height="12" fill="#c9ecb8" stroke="#3aa518"/><path d="M5 16h14M5 20h14M10 12v12M14.500 12v12" stroke="#3aa518"/><rect x="13" y="20" width="6" height="6" fill="#e7b55a"/></svg></div>
    <div class="run"><svg width="24" height="29" viewBox="0 0 24 30" color="#c0602a"><use href="#sheet"/><path d="M4.500 13h15M6 13.500v8.500h12v-8.500M12 22v2M9 26l3-2.500 3 2.500M8 17h3M8 19h3" fill="none" stroke="#b04d18" stroke-width="1.300"/><rect x="12.500" y="15" width="4" height="5" fill="#e07b40"/></svg></div>
    <div class="run"><svg width="29" height="24" viewBox="0 0 29 24"><rect width="29" height="24" rx="1.500" fill="url(#gWb)"/><path d="M3 12q4-6 7 0t6 0" fill="none" stroke="#fff" stroke-width="2"/><path d="m17 14 3-5 7-9 2 2-8 9z" fill="#234"/></svg></div>
    <svg class="to-end" width="16" height="9"><path d="M.5 8.500 8 1l7.500 7.500" stroke="#ddd" fill="none" stroke-width="1.300"/></svg>
    <svg class="to-end" width="21" height="18"><use href="#net"/></svg>
    <svg class="to-end" width="15" height="19"><use href="#cam2"/></svg>
    <svg class="to-end" width="14" height="20"><use href="#mic2"/></svg>
    <svg class="i-batt" width="21" height="15"><use href="#batt"/></svg>
    <svg class="i-vol" width="21" height="16"><use href="#vol"/></svg>
    <span></span>
    <div class="two"><span data-w="28">ENG</span><span data-w="14">IN</span></div>
    <div class="two"><span data-w="52">2:17 PM</span><span data-w="66">6/19/2024</span></div>
    <svg width="28" height="28" viewBox="0 0 28 28"><path d="M0 0h19v16H7v4l-4-4H0z" fill="#fff"/><path d="M3 4h13M3 8h13M3 12h10" stroke="#1a2747" stroke-width="1.500"/><circle cx="18.500" cy="18.500" r="9.300" fill="#4a4f5a" stroke="#9aa"/><text x="18.500" y="23.500" font-size="14" text-anchor="middle" fill="#fff">4</text></svg>
    <i class="edge-line"></i>
  </div>
  <svg class="pointer" width="13" height="21" viewBox="0 0 13 21"><path d="M1 1v16l3.800-3.500L7.500 20l2.700-1.200L7.500 12.500H12z" fill="#000"/></svg>
  <div class="plate who"><span data-w="125">Ashwini Dongre</span></div>
  <div class="plate zoomer"><svg width="17" height="2"><path d="M0 1h17" stroke="#777" stroke-width="1.300"/></svg><svg width="18" height="18"><path d="M9 0v18M0 9h18" stroke="#fff" stroke-width="1.400"/></svg></div>
</section>

<aside class="roster">
  <div class="people">
    <div class="person"><div class="face kn"><span data-w="53">KN</span></div><div class="nm"><span data-w="93">Kaushik K N</span><svg width="20" height="20"><use href="#mute"/></svg></div></div>
    <div class="person"><div class="face sd"><span data-w="51">SD</span></div><div class="nm"><span data-w="104">Sean Franci...</span><svg width="20" height="20"><use href="#mute"/></svg></div></div>
    <div class="person"><div class="face talk ad"><span data-w="57">AD</span></div><div class="nm"><span data-w="125">Ashwini Dongre</span></div></div>
    <div class="person"><div class="face pn"><span data-w="54">PN</span></div><div class="nm"><span data-w="103">Pratiksha K...</span><svg width="20" height="20"><use href="#mute"/></svg></div></div>
    <div class="person"><div class="face ns"><span data-w="53">NS</span></div><div class="nm"><span data-w="63">Nithin S</span><svg width="20" height="20"><use href="#mute"/></svg></div></div>
    <div class="person"><div class="face sh"><span data-w="51">SH</span></div><div class="nm"><span data-w="104">Sameer Ma...</span><svg width="20" height="20"><use href="#mute"/></svg></div></div>
    <div class="person"><div class="face dh">D</div><div class="nm"><span data-w="70">Dhanush</span><svg width="20" height="20"><use href="#mute"/></svg></div></div>
    <div class="person"><div class="face va"><svg width="31" height="8" color="#fff"><use href="#dots"/></svg></div><div class="nm"><span data-w="60">View all</span></div></div>
  </div>
  <div class="self"><div class="face"><span data-w="39">PA</span></div></div>
</aside>
</main>

<footer class="bar host-task">
  <svg width="24" height="24"><use href="#win"/></svg>
  <div class="search">
    <svg class="glass" width="25" height="25"><use href="#lens"/></svg>
    <span data-w="198">Type here to search</span>
    <svg width="80" height="60" viewBox="0 0 80 60"><path d="M5 3v57" stroke="#5a4a55" stroke-width="5"/><path d="M5 6q22-3 40 3t32-3l1 27q-16 7-36 0T7 35z" fill="url(#gFb)"/><path d="M6 31q18-7 36 0t37-1l2 23q-18 6-37 1T9 56z" fill="url(#gFr)"/><circle cx="4.500" cy="4.500" r="4" fill="#5c4a58"/><path id="burst" fill="none" stroke="#fff" stroke-width="2"/><path d="m44.500 22.500 2.300 5 5.400.6-4 3.700 1.100 5.400-4.800-2.700-4.800 2.700 1.100-5.400-4-3.700 5.400-.6z" fill="#fff"/></svg>
  </div>
  <svg class="h-view" width="24" height="24"><use href="#tview"/></svg>
  <svg width="32" height="32" viewBox="0 0 32 27" preserveAspectRatio="none"><use href="#folder"/></svg>
  <svg width="36" height="36"><use href="#edge"/></svg>
  <svg width="35" height="36" viewBox="0 0 35 36"><path d="M9 6V2q0-1 1-1h15q1 0 1 1v4" fill="none" stroke="#2f9be0" stroke-width="1.800"/><path d="M0 5h35v26q0 5-5 5H5q-5 0-5-5z" fill="#f2f2f2"/><path d="M10 12h7v7.500h-7z" fill="#f25022"/><path d="M18 12h7v7.500h-7z" fill="#7fba00"/><path d="M10 20.500h7V28h-7z" fill="#00a4ef"/><path d="M18 20.500h7V28h-7z" fill="#ffb900"/></svg>
  <svg width="36" height="34" viewBox="0 0 36 34"><path d="M0 11 18 0l18 11v4H0z" fill="#0d4f96"/><path d="M4 10.500h29L20 24z" fill="#eee"/><path d="M0 12l36 20q0 2-2 2H2q-2 0-2-2z" fill="url(#gMail)"/><path d="M36 12 18 22l16.500 11.500q1.500-.5 1.500-2z" fill="#2c9fe6"/></svg>
  <svg width="34" height="34" viewBox="0 0 34 34"><g stroke="#111" stroke-width=".8"><path d="M17 0h14v13H17z" fill="#cfcfcf"/><path d="M13 14h18l3-3-2 5H13zM2 17h15v13H2z" fill="#cfcfcf"/><path d="M0 31h16l4-4v3l-4 4H0z" fill="#ddd"/></g><path d="M19 2h10v8.500H19zM4 19.500h11V28H4z" fill="#0a10e8"/><path d="m25 5-12 9 5 1-9 8 14-8-5-1z" fill="#fff200" stroke="#a90" stroke-width=".5"/></svg>
  <svg width="36" height="36" viewBox="0 0 36 36"><rect width="36" height="36" rx="5" fill="#2a8bf2"/><path d="M6 8h9q5 0 5 5t-5 5h-5M9 18l11 10H6" fill="none" stroke="#fff" stroke-width="4"/><path d="m24 5 3 6 3-6M24.500 21v-4q0-2.500 2.700-2.500T30 17v4M30 24h-2.500q-3 0-3 2.500t3 2.500H30" fill="none" stroke="#fff" stroke-width="1.700"/></svg>
  <div class="app live"><svg width="32" height="32" viewBox="0 0 32 32"><rect width="32" height="32" rx="4" fill="url(#gSky)"/><path d="M16 13 0 30q1 2 4 2h24q3 0 4-2z" fill="#4cc7f2"/><path d="m14 12-14 15v4l16-13 10 14h5q1-1 1-3L18 12q-2-2-4 0z" fill="#31b0ec"/><circle cx="23" cy="6" r="3" fill="#fff"/></svg></div>
  <div class="app live"><svg width="38" height="38"><svg width="36" height="36"><use href="#chrome"/></svg><circle cx="27" cy="27" r="11.500" fill="#0f98a8"/><text x="27" y="31.500" font-size="16" text-anchor="middle" fill="#fff">p</text></svg></div>
  <div class="app live front"><svg width="39" height="38"><svg width="34" height="34"><use href="#teams"/></svg><rect x="10" y="24" width="7" height="10" fill="#22e0e8"/><circle cx="27" cy="26" r="12" fill="#c42b1c"/><text x="27" y="32" font-size="17" text-anchor="middle" fill="#fff">1</text></svg></div>
  <span></span>
  <svg width="34" height="34" viewBox="0 0 34 34"><path d="M1 34v-3h5v3zM8 34v-6h5v6zM15 34V24h5v10zM23 34V15h8q2 0 2 2v15q0 2-2 2z" fill="url(#gUp)"/><path d="M0 22Q17 18 26 7l-5-5L33 0v12l-4-2Q18 23 1 25z" fill="url(#gUp)"/></svg>
  <span data-w="53">SEN...</span>
  <svg class="h-chev" width="18" height="10"><path d="M.5 9.500 9 1l8.500 8.500" stroke="#fff" fill="none" stroke-width="1.300"/></svg>
  <svg width="18" height="23"><use href="#cam2"/></svg>
  <svg width="16" height="24"><use href="#mic2"/></svg>
  <svg width="25" height="24" viewBox="0 0 25 24"><path d="M1 3.500 23.500 1v15M12 21.500 1 21V3.500" fill="none" stroke="#fff" stroke-width="1.300"/><path d="M7 11q2-5 7-2.500V6M15 10q0 4-2 5M7 13v4h3" fill="none" stroke="#fff" stroke-width="1.400"/><circle cx="19" cy="18.500" r="5.700" fill="#ff9500"/></svg>
  <svg width="24" height="20"><use href="#net"/></svg>
  <svg width="24" height="18"><use href="#batt"/></svg>
  <svg width="24" height="20"><use href="#vol"/></svg>
  <div class="two"><span data-w="33">ENG</span><span data-w="17">IN</span></div>
  <div class="two"><span data-w="65">2:17 PM</span><span data-w="84">6/19/2024</span></div>
  <div class="note"><svg width="24" height="24" viewBox="0 0 24 24"><path d="M1 1h22v17.500h-7L12 22.500 8 18.500H1z" fill="none" stroke="#fff" stroke-width="1.300"/></svg></div>
  <i class="peek"></i>
</footer>
<script>
/* sixteen-point burst on the flag */
(function(){
  let d='';
  for(let i=0;i<32;i++){const r=i%2?12.5:18,a=i*Math.PI/16;d+=(i?'L':'M')+(44.500+r*Math.sin(a)).toFixed(1)+' '+(30-r*Math.cos(a)).toFixed(1);}
  document.getElementById('burst').setAttribute('d',d+'z');
  /* labels keep their design width whichever fallback font is present */
  document.querySelectorAll('[data-w]').forEach(e=>{
    const w=+e.dataset.w,n=e.textContent.length;
    e.style.letterSpacing=((w-e.getBoundingClientRect().width)/n).toFixed(3)+'px';
  });
})();
</script>
</body>
</html>
